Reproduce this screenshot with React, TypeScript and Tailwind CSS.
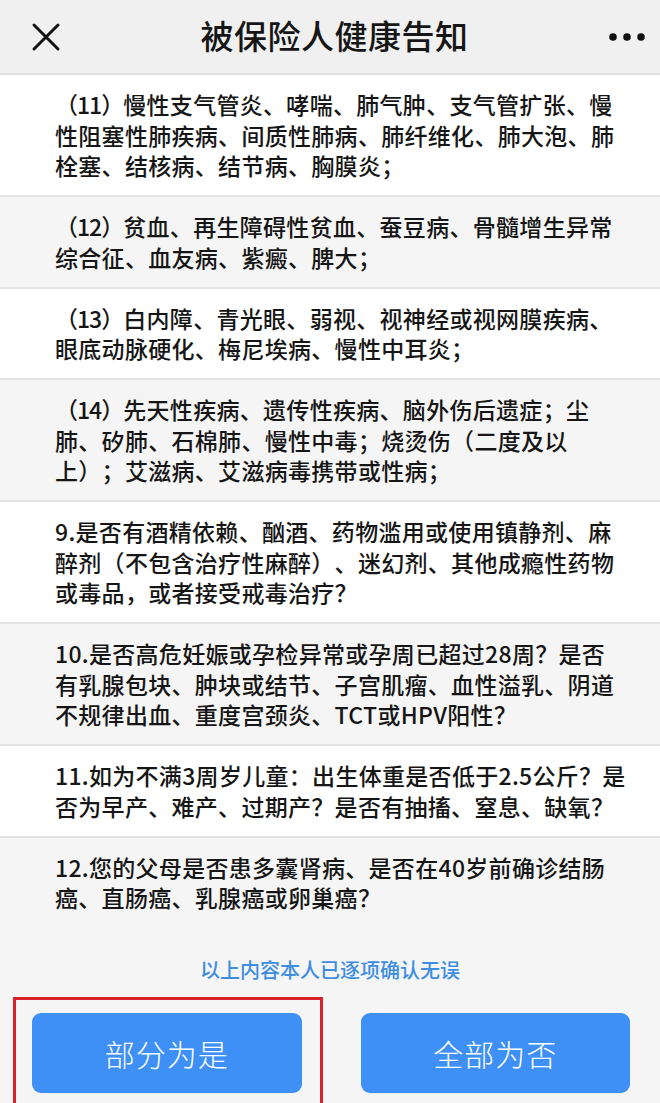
import React from "react";

type Item = { label?: string; lines: string[] };

const items: Item[] = [
  {
    label: "（11）",
    lines: [
      "慢性支气管炎、哮喘、肺气肿、支气管扩张、慢",
      "性阻塞性肺疾病、间质性肺病、肺纤维化、肺大泡、肺",
      "栓塞、结核病、结节病、胸膜炎；",
    ],
  },
  {
    label: "（12）",
    lines: ["贫血、再生障碍性贫血、蚕豆病、骨髓增生异常", "综合征、血友病、紫癜、脾大；"],
  },
  {
    label: "（13）",
    lines: ["白内障、青光眼、弱视、视神经或视网膜疾病、", "眼底动脉硬化、梅尼埃病、慢性中耳炎；"],
  },
  {
    label: "（14）",
    lines: [
      "先天性疾病、遗传性疾病、脑外伤后遗症；尘",
      "肺、矽肺、石棉肺、慢性中毒；烧烫伤（二度及以",
      "上）；艾滋病、艾滋病毒携带或性病；",
    ],
  },
  {
    lines: [
      "9.是否有酒精依赖、酗酒、药物滥用或使用镇静剂、麻",
      "醉剂（不包含治疗性麻醉）、迷幻剂、其他成瘾性药物",
      "或毒品，或者接受戒毒治疗？",
    ],
  },
  {
    lines: [
      "10.是否高危妊娠或孕检异常或孕周已超过28周？是否",
      "有乳腺包块、肿块或结节、子宫肌瘤、血性溢乳、阴道",
      "不规律出血、重度宫颈炎、TCT或HPV阳性？",
    ],
  },
  {
    lines: [
      "11.如为不满3周岁儿童：出生体重是否低于2.5公斤？是",
      "否为早产、难产、过期产？是否有抽搐、窒息、缺氧？",
    ],
  },
  {
    lines: ["12.您的父母是否患多囊肾病、是否在40岁前确诊结肠", "癌、直肠癌、乳腺癌或卵巢癌？"],
  },
];

function CloseIcon() {
  return (
    <svg width="30" height="30" viewBox="0 0 30 30" fill="none">
      <path d="M3 3L27 27M27 3L3 27" stroke="#111" strokeWidth="3" strokeLinecap="round" />
    </svg>
  );
}

function MoreIcon() {
  return (
    <svg width="40" height="10" viewBox="0 0 40 10">
      <circle cx="5" cy="5" r="3.8" fill="#111" />
      <circle cx="19" cy="5" r="3.8" fill="#111" />
      <circle cx="33" cy="5" r="3.8" fill="#111" />
    </svg>
  );
}

export default function App() {
  return (
    <div
      className="h-[1103px] overflow-hidden bg-[#f5f5f5] text-[#161616]"
      style={{ fontFamily: '"Noto Sans CJK SC", "Noto Sans", sans-serif' }}
    >
      <header className="h-[75px] bg-[#f0f0f0] border-b-2 border-[#dedede] flex items-center justify-between pl-[31px] pr-[12px]">
        <CloseIcon />
        <h1 className="text-[33px] font-medium leading-none tracking-[0.5px] pb-[2px]">被保险人健康告知</h1>
        <MoreIcon />
      </header>

      {items.map((item, i) => (
        <div
          key={i}
          className={`pl-[55px] pt-[14px] pb-[14.5px] ${i % 2 === 0 ? "bg-white" : "bg-[#f5f5f5]"} ${
            i < items.length - 1 ? "border-b-2 border-[#e3e3e3]" : ""
          }`}
        >
          <p className="text-[23px] leading-[30.5px] tracking-[0.3px] font-medium whitespace-nowrap [text-spacing-trim:space-all]">
            {item.lines.map((line, j) => (
              <React.Fragment key={j}>
                {j === 0 && item.label && <span className="tracking-[-1px]">{item.label}</span>}
                {line}
                {j < item.lines.length - 1 && <br />}
              </React.Fragment>
            ))}
          </p>
        </div>
      ))}

      <p className="mt-[29px] text-center text-[20px] leading-[28px] font-medium text-[#3d8de0]">
        以上内容本人已逐项确认无误
      </p>

      <div className="mt-[29px] grid grid-cols-2 gap-[59px] pl-[32px] pr-[30px]">
        <div className="relative">
          <button className="w-full h-[80px] rounded-[9px] bg-[#3e8ff6] text-white text-[30px] font-light tracking-[1px]">
            部分为是
          </button>
          <div className="absolute -left-[19px] -top-[16px] w-[310px] h-[130px] border-[3px] border-[#d9212b] pointer-events-none" />
        </div>
        <button className="w-full h-[80px] rounded-[9px] bg-[#3e8ff6] text-white text-[30px] font-light tracking-[1px]">
          全部为否
        </button>
      </div>
    </div>
  );
}
